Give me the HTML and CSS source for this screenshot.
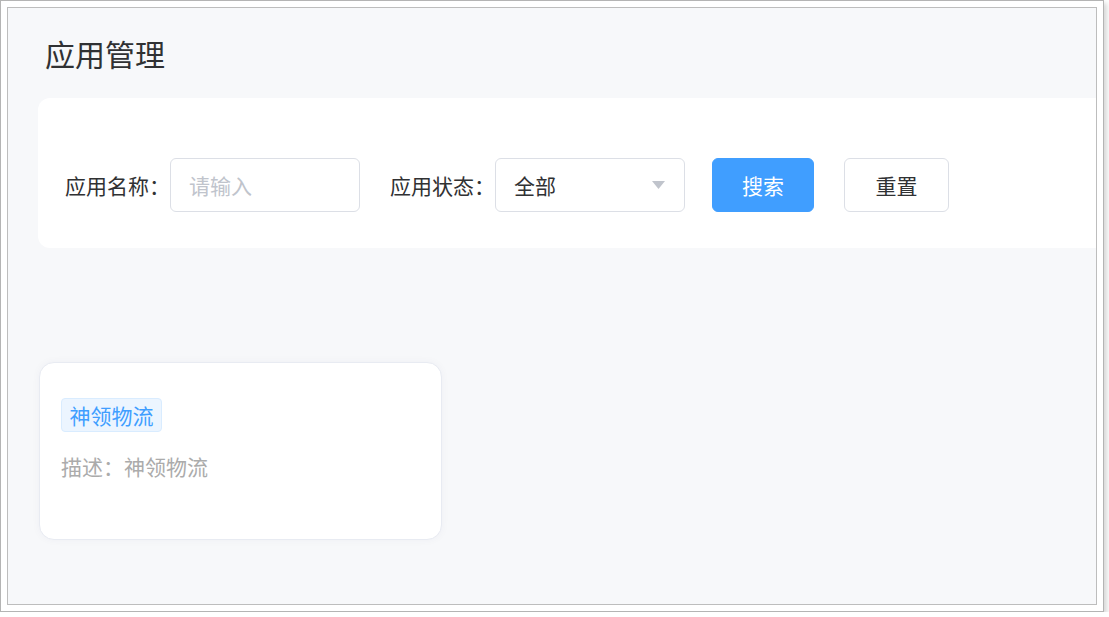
FILE: index.html
```html
<!DOCTYPE html>
<html lang="zh-CN">
<head>
    <meta charset="UTF-8">
    <title>应用管理</title>
    <link rel="stylesheet" href="styles.css">
</head>
<body>
    <div class="shot">
        <div class="page">
            <h1 class="title">应用管理</h1>

            <div class="search-card">
                <div class="form-item">
                    <span class="label">应用名称：</span>
                    <div class="input">请输入</div>
                </div>
                <div class="form-item">
                    <span class="label">应用状态：</span>
                    <div class="input select">
                        <span class="value">全部</span>
                        <svg class="arrow" width="13" height="8" viewBox="0 0 13 8">
                            <path d="M0 0 H13 L6.5 8 Z" fill="#c0c4cc"/>
                        </svg>
                    </div>
                </div>
                <button class="btn btn-primary">搜索</button>
                <button class="btn btn-default">重置</button>
            </div>

            <div class="app-list">
                <div class="app-card">
                    <span class="tag">神领物流</span>
                    <p class="desc">描述：神领物流</p>
                </div>
            </div>
        </div>
    </div>
</body>
</html>
```

FILE: styles.css
```css
body {
    margin: 0;
    background: #fff;
    font-family: "Noto Sans CJK SC", "Noto Sans", sans-serif;
    color: #303133;
}

.shot {
    width: 1090px;
    height: 598px;
    padding: 6px;
    border: 1px solid #b4b4b4;
    background: #fff;
    box-shadow: 3px 3px 5px rgba(0, 0, 0, 0.16);
}

.page {
    height: 598px;
    box-sizing: border-box;
    border: 1px solid #bdbdbd;
    background: #f7f8fa;
    overflow: hidden;
    padding: 23px 0 0 30px;
}

.title {
    margin: 0 0 22px 0;
    padding-left: 7px;
    font-size: 30px;
    font-weight: normal;
    line-height: 45px;
    color: #303133;
}

.search-card {
    width: 1100px;
    height: 150px;
    box-sizing: border-box;
    padding: 60px 27px 36px;
    background: #fff;
    border-radius: 12px;
    display: flex;
    align-items: center;
}

.form-item {
    display: flex;
    align-items: center;
    margin-right: 30px;
}

.form-item:nth-child(2) {
    margin-right: 27px;
}

.label {
    font-size: 21px;
    width: 105px;
    white-space: nowrap;
}

.input {
    width: 190px;
    height: 54px;
    box-sizing: border-box;
    border: 1px solid #dcdfe6;
    border-radius: 6px;
    padding: 0 18px;
    display: flex;
    align-items: center;
    font-size: 21px;
    color: #c0c4cc;
}

.select {
    justify-content: space-between;
    color: #303133;
}

.select .arrow {
    margin-right: 1px;
}

.btn {
    height: 54px;
    box-sizing: border-box;
    border-radius: 6px;
    font-family: inherit;
    font-size: 21px;
    padding: 0;
    cursor: pointer;
}

.btn-primary {
    width: 102px;
    background: #409eff;
    border: 1px solid #409eff;
    color: #fff;
    margin-right: 30px;
}

.btn-default {
    width: 105px;
    background: #fff;
    border: 1px solid #dcdfe6;
    color: #303133;
}

.app-list {
    margin-top: 114px;
    display: flex;
}

.app-card {
    width: 403px;
    height: 178px;
    box-sizing: border-box;
    margin-left: 1px;
    padding: 35px 21px;
    background: #fff;
    border: 1px solid #e8ebf2;
    border-radius: 15px;
    box-shadow: 0 0 8px rgba(0, 40, 100, 0.04);
}

.tag {
    display: inline-block;
    height: 34px;
    box-sizing: border-box;
    line-height: 32px;
    padding: 0 7.5px;
    font-size: 21px;
    color: #409eff;
    background: #ecf5ff;
    border: 1px solid #d9ecff;
    border-radius: 4px;
}

.desc {
    margin: 19px 0 0 0;
    font-size: 21px;
    line-height: 31px;
    color: #ababab;
}
```
